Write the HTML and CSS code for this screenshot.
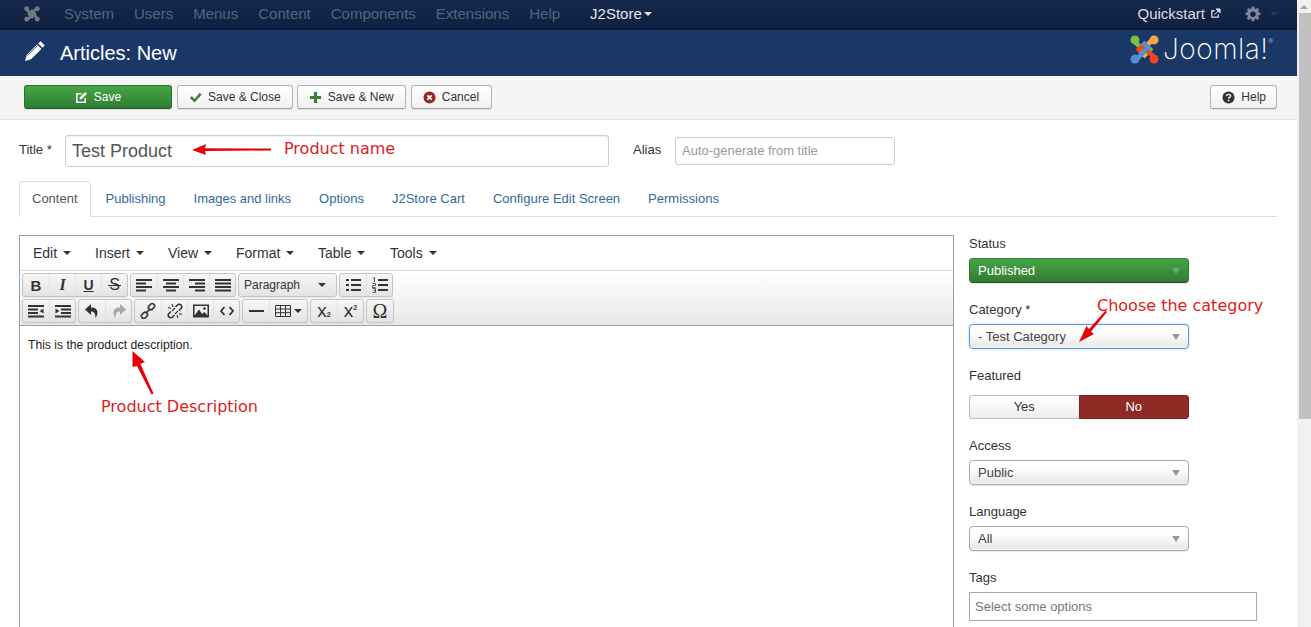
FILE: index.html
```html
<!DOCTYPE html>
<html lang="en">
<head>
<meta charset="utf-8">
<title>Articles: New</title>
<link rel="stylesheet" href="styles.css">
</head>
<body>
<svg class="defs" xmlns="http://www.w3.org/2000/svg">
  <symbol id="arm" viewBox="0 0 100 100">
    <circle cx="17" cy="17" r="15.500" fill="currentColor"/>
    <path d="M15 22 L57 62 L75 44" fill="none" stroke="currentColor" stroke-width="16"/>
  </symbol>
  <symbol id="i-left" viewBox="0 0 16 16"><path d="M0 3h16M0 6.500h10M0 10h16M0 13.500h10" stroke="currentColor" stroke-width="2"/></symbol>
  <symbol id="i-center" viewBox="0 0 16 16"><path d="M0 3h16M3 6.500h10M0 10h16M3 13.500h10" stroke="currentColor" stroke-width="2"/></symbol>
  <symbol id="i-right" viewBox="0 0 16 16"><path d="M0 3h16M6 6.500h10M0 10h16M6 13.500h10" stroke="currentColor" stroke-width="2"/></symbol>
  <symbol id="i-just" viewBox="0 0 16 16"><path d="M0 3h16M0 6.500h16M0 10h16M0 13.500h16" stroke="currentColor" stroke-width="2"/></symbol>
  <symbol id="i-bul" viewBox="0 0 16 16"><path d="M6 3h10M6 8h10M6 13h10M1 3h3M1 8h3M1 13h3" stroke="currentColor" stroke-width="2"/></symbol>
  <symbol id="i-num" viewBox="0 0 16 16"><path d="M6 3h10M6 8h10M6 13h10" stroke="currentColor" stroke-width="2"/><path d="M1 1.500l1.500-1v4.500M.5 6.500h3v2h-3v2h3M.5 11.500h3v4h-3M1.500 13.500h2" fill="none" stroke="currentColor" stroke-width=".8"/></symbol>
  <symbol id="i-out" viewBox="0 0 16 16"><path d="M0 3h16M0 6.500h10M0 10h10M0 13.500h16" stroke="currentColor" stroke-width="2"/><path d="M15.500 5.500v5l-4-2.500z" fill="currentColor"/></symbol>
  <symbol id="i-in" viewBox="0 0 16 16"><path d="M0 3h16M6 6.500h10M6 10h10M0 13.500h16" stroke="currentColor" stroke-width="2"/><path d="M.5 5.500v5l4-2.500z" fill="currentColor"/></symbol>
  <symbol id="i-undo" viewBox="0 0 16 16"><path d="M7 1L1 6.500 7 12V8.500c3 0 4.500 1.500 4.500 6.500 3-4 3.500-10.500-4.500-10.500z" fill="currentColor"/></symbol>
  <symbol id="i-redo" viewBox="0 0 16 16"><path d="M9 1l6 5.500L9 12V8.500c-3 0-4.500 1.500-4.500 6.500-3-4-3.500-10.500 4.500-10.500z" fill="currentColor"/></symbol>
  <symbol id="i-link" viewBox="0 0 16 16"><g fill="none" stroke="currentColor" stroke-width="1.600"><rect x="8.200" y="1.400" width="6.600" height="4.600" rx="2.200" transform="rotate(-45 11.500 3.700)"/><rect x="1.200" y="10" width="6.600" height="4.600" rx="2.200" transform="rotate(-45 4.500 12.300)"/><path d="M5.800 10.200l4.400-4.400"/></g></symbol>
  <symbol id="i-unlink" viewBox="0 0 16 16"><g fill="none" stroke="currentColor" stroke-width="1.600"><path d="M8.500 4l2-2c1-1 2.600-1 3.500 0s1 2.500 0 3.500l-2 2M7.500 12l-2 2c-1 1-2.600 1-3.500 0s-1-2.500 0-3.500l2-2"/><path d="M1 4.500l3 1M5 1l1 3M15 11.500l-3-1M11 15l-1-3M5 8l3-3M8 11l3-3" stroke-width="1.100"/></g></symbol>
  <symbol id="i-img" viewBox="0 0 16 16"><path d="M0 1.500h16v13H0z" fill="currentColor"/><path d="M1.500 3h13v9.500l-3-3.500-2.500 2-3-4.500-4.500 6z" fill="#eee"/><circle cx="11.500" cy="5.500" r="1.300" fill="currentColor"/></symbol>
  <symbol id="i-code" viewBox="0 0 16 16"><path d="M5.500 4L2 8l3.500 4M10.500 4L14 8l-3.500 4" fill="none" stroke="currentColor" stroke-width="1.800"/></symbol>
  <symbol id="i-table" viewBox="0 0 16 16"><path d="M.5 2.500h15v11H.5zM.5 6h15M.5 9.700h15M5.500 2.500v11M10.500 2.500v11" fill="none" stroke="currentColor"/></symbol>
</svg>

<div class="page">
  <div class="main">
    <nav class="topnav">
      <svg class="nav-logo" viewBox="0 0 100 100">
        <use href="#arm"/>
        <use href="#arm" transform="rotate(90 50 50)"/>
        <use href="#arm" transform="rotate(180 50 50)"/>
        <use href="#arm" transform="rotate(270 50 50)"/>
      </svg>
      <ul class="nav-list">
        <li>System</li><li>Users</li><li>Menus</li><li>Content</li><li>Components</li><li>Extensions</li><li>Help</li>
      </ul>
      <div class="nav-active">J2Store<span class="caret caret-white"></span></div>
      <div class="nav-right">
        <span class="quick">Quickstart</span>
        <svg class="ext-icon" viewBox="0 0 12 12"><path d="M9 7v3H2V3h3" fill="none" stroke="currentColor" stroke-width="1.400"/><path d="M4.500 7.500L10 2M6.500 1h4.500v4.500z" fill="currentColor" stroke="currentColor"/></svg>
        <svg class="gear" viewBox="0 0 16 16"><path d="M6.500 0h3l.4 2.200 1.400.6L13.200 1.500l2.100 2.100-1.300 1.900.6 1.400L16.800 7v2.900l-2.200.4-.6 1.400 1.300 1.900-2.100 2.100-1.900-1.300-1.400.6-.4 2.200h-3l-.4-2.200-1.400-.6-1.900 1.300L.7 13.600 2 11.700l-.6-1.400-2.200-.4V7l2.200-.4.600-1.400L.7 3.600 2.800 1.500l1.900 1.300 1.400-.6z" transform="translate(1.200 .6) scale(.85)" fill="currentColor"/><circle cx="8" cy="8.300" r="2.700" fill="#12264a"/></svg>
        <span class="caret caret-dark"></span>
      </div>
    </nav>

    <header class="headbar">
      <svg class="pencil" viewBox="0 0 22 22"><path d="M16.500 1.200l4.300 4.300-2.300 2.300-4.300-4.300zM13.100 4.600l4.300 4.300L7 19.300 1 21l1.700-6z" fill="#fff"/><path d="M3.800 15.300l9.800-9.800" stroke="#1a3867" stroke-width=".8"/></svg>
      <h1 class="page-title">Articles: New</h1>
      <div class="brand">
        <svg class="brand-mark" viewBox="0 0 100 100">
          <use href="#arm" class="c-green"/>
          <use href="#arm" class="c-orange" transform="rotate(90 50 50)"/>
          <use href="#arm" class="c-red" transform="rotate(180 50 50)"/>
          <use href="#arm" class="c-blue" transform="rotate(270 50 50)"/>
        </svg>
        <span class="brand-word">Joomla!</span><span class="brand-reg">®</span>
      </div>
    </header>

    <div class="toolbar">
      <button class="btn btn-save">
        <svg class="ico" viewBox="0 0 14 14"><path d="M11 7.500V12H2V3h5" fill="none" stroke="#fff" stroke-width="1.600"/><path d="M5 7l6-6 2 2-6 6H5z" fill="#fff"/></svg>Save
      </button>
      <button class="btn">
        <svg class="ico" viewBox="0 0 14 14"><path d="M1 7.500l2-2 3 3L11.500 2l2 2L6 12.500z" fill="#378137"/></svg>Save &amp; Close
      </button>
      <button class="btn btn-tight">
        <svg class="ico" viewBox="0 0 14 14"><path d="M5.300 1h3.400v4.300H13v3.400H8.700V13H5.300V8.700H1V5.300h4.300z" fill="#378137"/></svg>Save &amp; New
      </button>
      <button class="btn btn-cancel">
        <svg class="ico" viewBox="0 0 14 14"><circle cx="7" cy="7" r="6.500" fill="#942a25"/><path d="M4.700 4.700l4.600 4.600M9.300 4.700L4.700 9.300" stroke="#fff" stroke-width="1.900"/></svg>Cancel
      </button>
      <button class="btn btn-help">
        <svg class="ico" viewBox="0 0 14 14"><circle cx="7" cy="7" r="6.500" fill="#333"/><path d="M4.800 5.500C5 3 9.300 3 9.300 5.400c0 1.600-2.300 1.500-2.300 3" fill="none" stroke="#fff" stroke-width="1.500"/><path d="M6.200 9.500h1.700v1.600H6.200z" fill="#fff"/></svg>Help
      </button>
    </div>

    <div class="content">
      <div class="title-row">
        <label class="title-label">Title *</label>
        <div class="title-input">Test Product</div>
        <label class="alias-label">Alias</label>
        <div class="alias-input">Auto-generate from title</div>
      </div>

      <ul class="tabs">
        <li class="tab tab-active">Content</li>
        <li class="tab">Publishing</li>
        <li class="tab">Images and links</li>
        <li class="tab">Options</li>
        <li class="tab">J2Store Cart</li>
        <li class="tab">Configure Edit Screen</li>
        <li class="tab">Permissions</li>
      </ul>

      <div class="columns">
        <section class="editor">
          <div class="menubar">
            <span class="menu-item menu-edit">Edit<span class="caret"></span></span>
            <span class="menu-item menu-insert">Insert<span class="caret"></span></span>
            <span class="menu-item menu-view">View<span class="caret"></span></span>
            <span class="menu-item menu-format">Format<span class="caret"></span></span>
            <span class="menu-item menu-table">Table<span class="caret"></span></span>
            <span class="menu-item">Tools<span class="caret"></span></span>
          </div>
          <div class="mce-toolbar">
            <div class="mce-row">
              <div class="mce-group">
                <span class="mb txt-b">B</span>
                <span class="mb txt-i">I</span>
                <span class="mb txt-u">U</span>
                <span class="mb txt-s">S</span>
              </div>
              <div class="mce-group">
                <span class="mb"><svg class="mi"><use href="#i-left"/></svg></span>
                <span class="mb"><svg class="mi"><use href="#i-center"/></svg></span>
                <span class="mb"><svg class="mi"><use href="#i-right"/></svg></span>
                <span class="mb"><svg class="mi"><use href="#i-just"/></svg></span>
              </div>
              <div class="mce-group">
                <span class="mb mb-format">Paragraph<span class="caret"></span></span>
              </div>
              <div class="mce-group">
                <span class="mb"><svg class="mi"><use href="#i-bul"/></svg></span>
                <span class="mb"><svg class="mi"><use href="#i-num"/></svg></span>
              </div>
            </div>
            <div class="mce-row">
              <div class="mce-group">
                <span class="mb"><svg class="mi"><use href="#i-out"/></svg></span>
                <span class="mb"><svg class="mi"><use href="#i-in"/></svg></span>
              </div>
              <div class="mce-group">
                <span class="mb"><svg class="mi"><use href="#i-undo"/></svg></span>
                <span class="mb mb-off"><svg class="mi"><use href="#i-redo"/></svg></span>
              </div>
              <div class="mce-group">
                <span class="mb"><svg class="mi"><use href="#i-link"/></svg></span>
                <span class="mb"><svg class="mi"><use href="#i-unlink"/></svg></span>
                <span class="mb"><svg class="mi"><use href="#i-img"/></svg></span>
                <span class="mb"><svg class="mi"><use href="#i-code"/></svg></span>
              </div>
              <div class="mce-group">
                <span class="mb"><span class="hr-line"></span></span>
                <span class="mb mb-wide"><svg class="mi"><use href="#i-table"/></svg><span class="caret"></span></span>
              </div>
              <div class="mce-group">
                <span class="mb txt-x">x<span class="sub">2</span></span>
                <span class="mb txt-x">x<span class="sup">2</span></span>
              </div>
              <div class="mce-group">
                <span class="mb txt-omega">Ω</span>
              </div>
            </div>
          </div>
          <div class="editor-body">This is the product description.</div>
        </section>

        <aside class="sidebar">
          <div class="field">
            <label class="field-label">Status</label>
            <div class="select select-green">Published<span class="sel-caret"></span></div>
          </div>
          <div class="field">
            <label class="field-label">Category *</label>
            <div class="select select-focus">- Test Category<span class="sel-caret"></span></div>
          </div>
          <div class="field field-featured">
            <label class="field-label">Featured</label>
            <div class="toggle">
              <span class="toggle-yes">Yes</span>
              <span class="toggle-no">No</span>
            </div>
          </div>
          <div class="field">
            <label class="field-label">Access</label>
            <div class="select">Public<span class="sel-caret"></span></div>
          </div>
          <div class="field">
            <label class="field-label">Language</label>
            <div class="select">All<span class="sel-caret"></span></div>
          </div>
          <div class="field">
            <label class="field-label">Tags</label>
            <div class="tags-input">Select some options</div>
          </div>
        </aside>
      </div>
    </div>

    <svg class="arrows" viewBox="0 0 1297 627">
      <path d="M271 148.500L205 148.300 206 144 192 150 206 155 205 151 271 150.500z"/>
      <path d="M1105.500 310.500L1089 329 1086.500 326 1079 342 1094 334 1091 331.500 1107 312z"/>
      <path d="M153.500 393.500L140.500 364 145 362 132.500 351 132.500 367 137 366 151.500 394.500z"/>
    </svg>
    <span class="note note-name">Product name</span>
    <span class="note note-cat">Choose the category</span>
    <span class="note note-desc">Product Description</span>
  </div>

  <div class="scrollbar">
    <span class="scroll-up"></span>
    <span class="scroll-thumb"></span>
  </div>
</div>
</body>
</html>
```

FILE: styles.css
```css
* { box-sizing: border-box; }
html, body { margin: 0; padding: 0; height: 627px; overflow: hidden; }
body { font-family: "Liberation Sans", Arial, sans-serif; font-size: 13px; color: #333; background: #fff; }
ul { list-style: none; margin: 0; padding: 0; }
.defs { display: none; }

.page { display: flex; height: 627px; overflow: hidden; }
.main { position: relative; flex: 1; min-width: 0; overflow: hidden; }

/* scrollbar */
.scrollbar { width: 14px; background: #f1f1f1; display: flex; flex-direction: column; align-items: center; }
.scroll-up { margin-top: 5px; width: 0; height: 0; border-left: 4px solid transparent; border-right: 4px solid transparent; border-bottom: 4px solid #a3a3a3; }
.scroll-thumb { margin-top: 4px; width: 12px; margin-left: 1px; height: 406px; background: #c1c1c1; }

/* top nav */
.topnav { height: 30px; display: flex; align-items: center; background: linear-gradient(#14294d, #10203f); border-bottom: 1px solid #0b1930; font-size: 15px; padding-bottom: 2px; }
.nav-logo { width: 16px; height: 16px; margin-left: 24px; color: #6f7887; flex: none; }
.nav-list { display: flex; gap: 20px; margin-left: 24px; color: #54647e; }
.nav-active { margin-left: 30px; color: #e4e7ec; display: flex; align-items: center; }
.caret { display: inline-block; width: 0; height: 0; margin-left: 6px; border-left: 4px solid transparent; border-right: 4px solid transparent; border-top: 4px solid #333; }
.caret-white { border-top-color: #e4e7ec; margin-left: 2px; }
.caret-dark { border-top-color: #1f3a63; margin-left: 9px; }
.nav-right { margin-left: auto; margin-right: 19px; display: flex; align-items: center; color: #d9dee6; }
.ext-icon { width: 11px; height: 11px; margin-left: 5px; }
.gear { width: 16px; height: 16px; margin-left: 24px; color: #7d8797; }

/* header */
.headbar { height: 46px; background: #1a3867; display: flex; align-items: center; color: #fff; padding-left: 24px; }
.pencil { width: 22px; height: 22px; margin-top: -4px; }
.page-title { margin: 0 0 0 14px; font-size: 20px; font-weight: 400; }
.brand { margin-left: auto; margin-right: 24px; display: flex; align-items: flex-start; margin-top: -7px; }
.brand-mark { width: 29px; height: 29px; }
.c-green { color: #7ac143; }
.c-orange { color: #f9a541; }
.c-red { color: #f44321; }
.c-blue { color: #5091cd; }
.brand-word { margin-left: 4px; font-family: Inter, sans-serif; font-weight: 200; font-size: 28px; line-height: 29px; letter-spacing: .5px; color: #fff; }
.brand-reg { font-size: 6px; color: #c9d2df; margin-top: 3px; }

/* toolbar */
.toolbar { height: 44px; background: #f5f5f5; border-bottom: 1px solid #e3e3e3; display: flex; align-items: flex-start; gap: 5px; padding: 9px 20px 0 24px; }
.btn { height: 24px; padding: 0 11px; display: flex; align-items: center; font: 12px "Liberation Sans", Arial, sans-serif; color: #333; background: linear-gradient(#fff, #f0f0f0); border: 1px solid #b3b3b3; border-bottom-color: #a0a0a0; border-radius: 3px; box-shadow: 0 1px 1px rgba(0,0,0,.08); }
.ico { width: 13px; height: 13px; margin-right: 6px; flex: none; }
.btn-save { width: 148px; justify-content: center; color: #fff; background: linear-gradient(#46a546, #2f7d32); border-color: #2a6f2c; border-bottom-color: #1f5a22; }
.btn-tight { margin-left: -1px; }
.btn-cancel { padding-right: 12px; }
.btn-help { margin-left: auto; padding-right: 10px; }

/* content */
.content { padding: 15px 20px 0 19px; }
.title-row { display: flex; align-items: center; height: 32px; }
.title-label { width: 46px; margin-top: -3px; }
.title-input { width: 544px; height: 32px; border: 1px solid #ccc; border-radius: 3px; padding: 0 6px; font-size: 18px; line-height: 30px; color: #555; box-shadow: inset 0 1px 1px rgba(0,0,0,.06); }
.alias-label { margin-left: 24px; width: 42px; margin-top: -3px; }
.alias-input { width: 220px; height: 28px; border: 1px solid #ccc; border-radius: 3px; padding: 0 6px; line-height: 26px; color: #999; }

.tabs { display: flex; margin-top: 14px; height: 36px; border-bottom: 1px solid #ddd; color: #33699c; }
.tab { height: 36px; padding: 0 12px; margin-right: 2px; line-height: 33px; border: 1px solid transparent; }
.tab-active { background: #fff; color: #555; border-color: #ddd #ddd #fff; border-radius: 4px 4px 0 0; }

.columns { display: flex; gap: 15px; margin-top: 18px; align-items: flex-start; }

/* editor */
.editor { width: 935px; height: 500px; border: 1px solid #9e9e9e; flex: none; }
.menubar { height: 35px; display: flex; align-items: center; padding-left: 13px; font-size: 14px; color: #333; border-bottom: 1px solid #d9d9d9; }
.menu-item { display: flex; align-items: center; }
.menu-edit { width: 62px; }
.menu-insert { width: 73px; }
.menu-view { width: 68px; }
.menu-format { width: 82px; }
.menu-table { width: 72px; }

.mce-toolbar { height: 55px; padding: 2px 2px 0; background: linear-gradient(#fff, #e8e8e8); border-bottom: 1px solid #9e9e9e; display: flex; flex-direction: column; gap: 2px; }
.mce-row { display: flex; gap: 2px; }
.mce-group { display: flex; height: 24px; border: 1px solid #c5c5c5; border-radius: 3px; background: linear-gradient(#f7f7f7, #e3e3e3); box-shadow: 0 1px 1px rgba(0,0,0,.06); }
.mb { width: 26px; display: flex; align-items: center; justify-content: center; color: #333; border-left: 1px solid #e2e2e2; }
.mb:first-child { border-left: 0; }
.mb-off { color: #a8a8a8; }
.mi { width: 16px; height: 16px; color: #333; }
.mb-off .mi { color: #a8a8a8; }
.txt-b { font-weight: 700; font-size: 15px; }
.txt-i { font-style: italic; font-size: 16px; font-family: "Liberation Serif", serif; font-weight: 700; }
.txt-u { font-weight: 700; font-size: 14px; text-decoration: underline; }
.txt-s { font-size: 16px; position: relative; }
.txt-s::after { content: ""; position: absolute; left: 6px; right: 6px; top: 11px; height: 1px; background: #333; }
.mb-format { width: 97px; justify-content: flex-start; padding-left: 5px; font-size: 12px; }
.mb-format .caret { margin-left: 18px; }
.mb-wide { width: 38px; }
.mb-wide .caret { margin-left: 3px; }
.hr-line { width: 15px; height: 2px; background: #333; }
.txt-x { font-size: 19px; line-height: 20px; align-items: center; }
.sub { font-size: 7px; line-height: 8px; align-self: flex-end; margin-bottom: 3px; font-weight: 700; }
.sup { font-size: 7px; line-height: 8px; align-self: flex-start; margin-top: 4px; font-weight: 700; }
.txt-omega { font-family: "Liberation Serif", serif; font-size: 20px; }
.editor-body { padding: 11px 8px; font-size: 12.150px; line-height: 16px; color: #222; }

/* sidebar */
.sidebar { width: 293px; flex: none; display: flex; flex-direction: column; gap: 18px; margin-top: 0; }
.field-label { display: block; height: 15px; line-height: 17px; margin-bottom: 8px; font-size: 13px; }
.field-featured .field-label { margin-bottom: 13px; }
.select { position: relative; width: 220px; height: 25px; line-height: 23px; padding-left: 8px; border: 1px solid #aaa; border-radius: 4px; font-size: 13px; color: #444; background: linear-gradient(#fff 30%, #e9e9e9 90%, #f4f4f4); box-shadow: 0 1px 1px rgba(0,0,0,.1); }
.sel-caret { position: absolute; right: 8px; top: 9px; width: 0; height: 0; border-left: 4px solid transparent; border-right: 4px solid transparent; border-top: 6px solid #999; }
.select-green { color: #fff; border-color: #2f7d32; border-bottom-color: #1f5a22; background: linear-gradient(#46a546, #337a35); }
.select-green .sel-caret { border-top-color: #6fa870; }
.select-focus { border-color: #5897dd; box-shadow: 0 0 2px rgba(82,168,236,.6); }
.toggle { display: flex; width: 220px; height: 24px; }
.toggle-yes, .toggle-no { flex: 1; text-align: center; line-height: 22px; border: 1px solid #bbb; }
.toggle-yes { background: linear-gradient(#fff, #eee); border-radius: 3px 0 0 3px; border-right: 0; color: #333; }
.toggle-no { background: #8f2a25; border-color: #7d221e; color: #fff; border-radius: 0 3px 3px 0; }
.tags-input { width: 288px; height: 29px; border: 1px solid #aaa; padding-left: 5px; line-height: 27px; color: #777; font-size: 13px; }

/* annotations */
.arrows { position: absolute; left: 0; top: 0; width: 1297px; height: 627px; fill: #e8000d; pointer-events: none; }
.note { position: absolute; font-family: "DejaVu Sans", sans-serif; font-size: 16px; line-height: 18px; color: #dc1c1c; white-space: nowrap; }
.note-name { left: 284px; top: 140px; }
.note-cat { left: 1097px; top: 297px; }
.note-desc { left: 101px; top: 398px; }
```
